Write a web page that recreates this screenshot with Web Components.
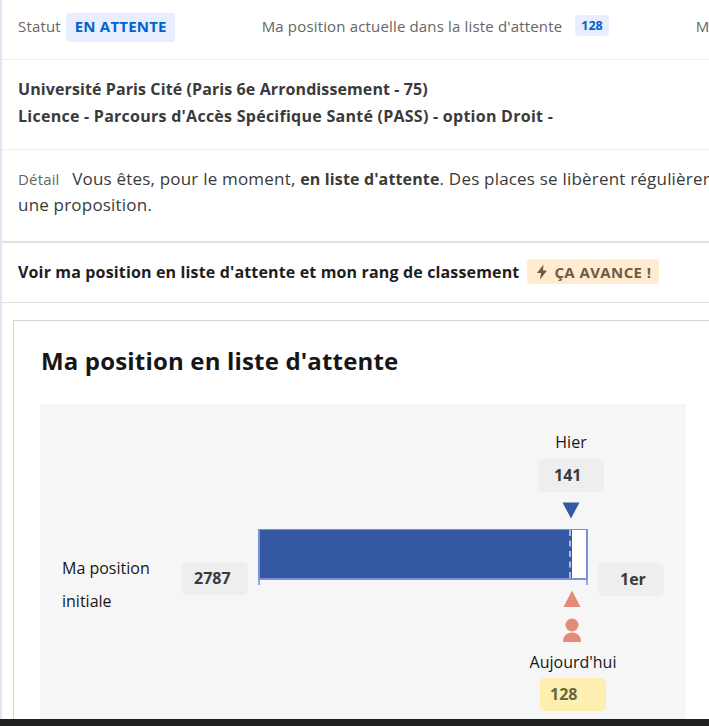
<!DOCTYPE html>
<html lang="fr">
<head>
<meta charset="utf-8">
<title>Ma position en liste d'attente</title>
<style>
  html, body { margin: 0; height: 726px; overflow: hidden; background: #fff; }
  body { font-family: "Open Sans", "Liberation Sans", sans-serif; color: #3a3a3a; }
</style>
</head>
<body>
<x-app></x-app>
<script>
class BadgeElement extends HTMLElement {
  constructor() {
    super();
    this.attachShadow({ mode: 'open' }).innerHTML = `
      <style>
        :host {
          display: inline-flex;
          align-items: center;
          gap: 6px;
          box-sizing: border-box;
          border-radius: 4px;
          font-weight: 700;
          white-space: nowrap;
          height: 29px;
          padding: 0 8px 3px 9px;
          font-size: 15px;
          letter-spacing: .2px;
          background: #e8edff;
          color: #0063cb;
        }
        :host([kind="small"]) { height: 21px; padding: 0 6px; font-size: 12.5px; letter-spacing: 0; }
        :host([kind="warm"]) { height: 25px; padding: 0 8px 0 9px; letter-spacing: .4px; background: #feebd0; color: #6f5b45; }
      </style>
      <slot></slot>
    `;
  }
}

class RowElement extends HTMLElement {
  constructor() {
    super();
    this.attachShadow({ mode: 'open' }).innerHTML = `
      <style>
        :host {
          display: flex;
          align-items: center;
          box-sizing: border-box;
          padding-left: 16px;
          border-bottom: 1px solid #eeeeee;
          white-space: nowrap;
        }
      </style>
      <slot></slot>
    `;
  }
}

class ValueBoxElement extends HTMLElement {
  constructor() {
    super();
    this.attachShadow({ mode: 'open' }).innerHTML = `
      <style>
        :host {
          position: absolute;
          display: flex;
          align-items: center;
          box-sizing: border-box;
          width: 66px;
          height: 33px;
          padding: 0 0 2px 12px;
          border-radius: 5px;
          background: #eeeeee;
          color: #3a3a3a;
          font-size: 16px;
          font-weight: 700;
        }
        :host([tone="today"]) { background: #feeeb0; color: #66673d; padding-left: 10px; }
      </style>
      <slot></slot>
    `;
  }
}

class PositionChartElement extends HTMLElement {
  constructor() {
    super();
    this.attachShadow({ mode: 'open' }).innerHTML = `
      <style>
        :host {
          display: block;
          position: relative;
          width: 646px;
          height: 315px;
          background: #f6f6f6;
          color: #161616;
          font-size: 16px;
        }
        .label { position: absolute; white-space: nowrap; transform: translateX(-50%); }
        .initial { position: absolute; left: 22px; top: 148px; line-height: 33px; }
        .track {
          position: absolute;
          left: 218px;
          top: 125px;
          width: 330px;
          height: 51px;
          box-sizing: border-box;
          background: #fff;
          border: 2px solid #7b92d9;
          border-width: 1px 2px 2px 2px;
        }
        .fill {
          position: relative;
          width: 312px;
          height: 100%;
          background: #3558a2;
        }
        .fill::after {
          content: "";
          position: absolute;
          top: 0;
          bottom: 0;
          right: 1px;
          border-right: 2px dashed #a9b9e6;
        }
        .tick { position: absolute; top: 176px; width: 2px; height: 5px; background: #95a8e2; }
        svg { position: absolute; display: block; }
      </style>
      <div class="label" style="left:531px;top:27px">Hier</div>
      <x-value-box style="left:498px;top:55px;padding-left:16px">141</x-value-box>
      <svg style="left:522px;top:98px" width="18" height="17" viewBox="0 0 18 17">
        <path d="M0.5 0.5H17.5L9 16.5Z" fill="#3558a2"/>
      </svg>
      <div class="initial">Ma position<br>initiale</div>
      <x-value-box style="left:142px;top:158px">2787</x-value-box>
      <div class="track"><div class="fill"></div></div>
      <div class="tick" style="left:218px"></div>
      <div class="tick" style="left:546px"></div>
      <x-value-box style="left:558px;top:159px;padding-left:22px">1er</x-value-box>
      <svg style="left:523px;top:186px" width="18" height="17" viewBox="0 0 18 17">
        <path d="M9 0.5L17.5 17H0.5Z" fill="#e38b76"/>
      </svg>
      <svg style="left:522px;top:214px" width="20" height="24" viewBox="0 0 20 24">
        <circle cx="10" cy="7" r="6.5" fill="#e38b76"/>
        <path d="M1 24C1 18 5 14.5 10 14.5S19 18 19 24Z" fill="#e38b76"/>
      </svg>
      <div class="label" style="left:533px;top:247px">Aujourd'hui</div>
      <x-value-box tone="today" style="left:500px;top:274px">128</x-value-box>
    `;
  }
}

class AppElement extends HTMLElement {
  constructor() {
    super();
    this.attachShadow({ mode: 'open' }).innerHTML = `
      <style>
        :host {
          display: block;
          position: relative;
          width: 709px;
          height: 726px;
          overflow: hidden;
          color: #3a3a3a;
        }
        .sheet { width: 1100px; border-left: 2px solid #e3e3f1; height: 719px; box-sizing: border-box; }
        .muted { color: #666666; font-size: 15px; letter-spacing: .16px; }
        .status { height: 60px; padding-bottom: 4px; }
        .status .muted { margin-bottom: 4px; }
        .status .muted + x-badge { margin-left: 5px; }
        .current { margin-left: 87px; }
        .status .current + x-badge { margin-left: 13px; margin-bottom: 4px; }
        .next { margin-left: 87px; }
        .formation { height: 90px; padding-bottom: 3px; font-size: 16px; font-weight: 700; line-height: 27px; }
        .formation .l1 { letter-spacing: .1px; }
        .formation .l2 { letter-spacing: .26px; }
        .detail { height: 93px; padding-bottom: 8px; line-height: 26px; font-size: 17px; letter-spacing: .2px; border-bottom: 2px solid #e2e2e2; }
        .detail .muted { margin-right: 8px; letter-spacing: .16px; }
        .detail b { font-size: 16px; letter-spacing: .15px; }
        .toggle { height: 60px; padding-bottom: 2px; gap: 8px; font-size: 16px; letter-spacing: .15px; font-weight: 700; color: #1e1e1e; border-bottom: 1px solid #dedede; }
        .card {
          margin: 17px 0 0 11px;
          box-sizing: border-box;
          height: 420px;
          padding: 24px 0 0 26px;
          background: #fff;
          border: 1px solid #d5d5d5;
          border-bottom: 0;
        }
        h2 { margin: 0 0 27px; padding-left: 1px; font-size: 24px; letter-spacing: .17px; line-height: 32px; font-weight: 700; color: #161616; }
        .footer { height: 7px; background: #202020; }
      </style>
      <div class="sheet">
        <x-row class="status">
          <span class="muted">Statut</span>
          <x-badge>EN ATTENTE</x-badge>
          <span class="muted current">Ma position actuelle dans la liste d'attente</span>
          <x-badge kind="small">128</x-badge>
          <span class="muted next">Ma position</span>
        </x-row>
        <x-row class="formation">
          <div><span class="l1">Université Paris Cité (Paris 6e Arrondissement - 75)</span><br><span class="l2">Licence - Parcours d'Accès Spécifique Santé (PASS) - option Droit -</span></div>
        </x-row>
        <x-row class="detail">
          <div><span class="muted">Détail</span> Vous êtes, pour le moment, <b>en liste d'attente</b>. Des places se libèrent régulièrement et vous pouvez recevoir<br>une proposition.</div>
        </x-row>
        <x-row class="toggle">
          <span>Voir ma position en liste d'attente et mon rang de classement</span>
          <x-badge kind="warm">
            <svg width="12" height="16" viewBox="0 0 12 16"><path d="M7.5 0.5L1 9H5L4 15.5L11 6.5H7Z" fill="#6f5b45"/></svg>
            ÇA AVANCE !
          </x-badge>
        </x-row>
        <div class="card">
          <h2>Ma position en liste d'attente</h2>
          <x-position-chart></x-position-chart>
        </div>
      </div>
      <div class="footer"></div>
    `;
  }
}

// children first so upgrades happen with everything defined
customElements.define('x-badge', BadgeElement);
customElements.define('x-row', RowElement);
customElements.define('x-value-box', ValueBoxElement);
customElements.define('x-position-chart', PositionChartElement);
customElements.define('x-app', AppElement);
</script>
</body>
</html>
